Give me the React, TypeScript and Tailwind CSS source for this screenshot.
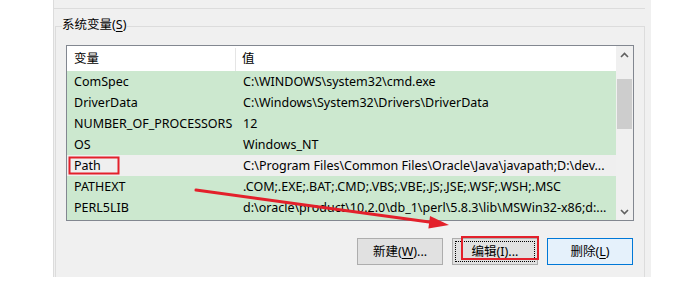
import React from "react";

const rows = [
  { name: "ComSpec", value: "C:\\WINDOWS\\system32\\cmd.exe" },
  { name: "DriverData", value: "C:\\Windows\\System32\\Drivers\\DriverData" },
  { name: "NUMBER_OF_PROCESSORS", value: "12" },
  { name: "OS", value: "Windows_NT" },
  { name: "Path", value: "C:\\Program Files\\Common Files\\Oracle\\Java\\javapath;D:\\dev...", hover: true },
  { name: "PATHEXT", value: ".COM;.EXE;.BAT;.CMD;.VBS;.VBE;.JS;.JSE;.WSF;.WSH;.MSC" },
  { name: "PERL5LIB", value: "d:\\oracle\\product\\10.2.0\\db_1\\perl\\5.8.3\\lib\\MSWin32-x86;d:..." },
];

function Chevron({ up }: { up?: boolean }) {
  return (
    <svg width="9" height="6" viewBox="0 0 9 6">
      <path
        d={up ? "M1 5 L4.5 1.5 L8 5" : "M1 1 L4.5 4.5 L8 1"}
        fill="none"
        stroke="#606060"
        strokeWidth="1.6"
      />
    </svg>
  );
}

function Scrollbar() {
  return (
    <div className="flex w-[17px] flex-col bg-[#f0f0f0]">
      <div className="flex h-[17px] items-center justify-center">
        <Chevron up />
      </div>
      <div className="h-[16px]" />
      <div className="mx-px h-[50px] bg-[#cdcdcd]" />
      <div className="flex-1" />
      <div className="flex h-[17px] items-center justify-center">
        <Chevron />
      </div>
    </div>
  );
}

function Btn({
  label,
  hot,
  tail,
  focus,
  active,
}: {
  label: string;
  hot: string;
  tail: string;
  focus?: boolean;
  active?: boolean;
}) {
  return (
    <div
      className={
        active
          ? "flex h-[27px] w-[86px] items-center justify-center border border-[#0078d7] bg-[#e5f1fb]"
          : "flex h-[27px] w-[86px] items-center justify-center border border-[#adadad] bg-[#e1e1e1]"
      }
    >
      <div
        className={
          focus
            ? "flex h-[21px] w-[80px] items-center justify-center border border-dotted border-black pt-px"
            : "flex h-[21px] w-[80px] items-center justify-center pt-px"
        }
      >
        <span>
          {label}(<span className="underline underline-offset-2">{hot}</span>){tail}
        </span>
      </div>
    </div>
  );
}

export default function App() {
  return (
    <div
      className="relative flex h-[287px] w-[684px] overflow-hidden bg-white text-[12.5px] leading-none text-black"
      style={{ fontFamily: '"Noto Sans", "Noto Sans CJK SC", sans-serif' }}
    >
      <div className="ml-[53px] flex h-[277px] w-[598px] flex-col border-l border-[#dcdcdc] bg-[#f0f0f0]">
        <div className="h-[8px]" />
        <div className="h-px w-[591px] bg-[#dcdcdc]" />
        <div className="h-[17px]" />

        {/* group box */}
        <div className="relative ml-px flex h-[251px] w-[590px] flex-col border-l border-r border-t border-[#dcdcdc]">
          <span className="absolute left-[6px] top-[-8px] bg-[#f0f0f0] pr-px">
            系统变量(<span className="underline underline-offset-2">S</span>)
          </span>

          {/* list view */}
          <div className="ml-[10px] mt-[18px] flex h-[176px] w-[568px] border border-[#828790]">
            <div className="flex flex-1 flex-col bg-[#cce8cf]">
              <div className="flex h-[25px] bg-white pt-[2px]">
                <div className="flex w-[169px] items-center border-r border-[#e5e5e5] pl-[7px]">变量</div>
                <div className="flex items-center pl-[6px]">值</div>
              </div>
              {rows.map((r) => (
                <div
                  key={r.name}
                  className={
                    r.hover ? "flex h-[21px] items-center bg-[#efefef] pt-[2px]" : "flex h-[21px] items-center pt-[2px]"
                  }
                >
                  <div className="w-[169px] shrink-0 pl-[7px]">{r.name}</div>
                  <div className="whitespace-nowrap pl-[7px]">{r.value}</div>
                </div>
              ))}
            </div>
            <Scrollbar />
          </div>

          {/* buttons */}
          <div className="ml-[301px] mt-[17px] flex gap-[9px]">
            <Btn label="新建" hot="W" tail="..." />
            <Btn label="编辑" hot="I" tail="..." focus />
            <Btn label="删除" hot="L" tail="" active />
          </div>
        </div>
      </div>

      {/* red annotations */}
      <svg className="pointer-events-none absolute inset-0" width="684" height="287" viewBox="0 0 684 287">
        <rect x="69.5" y="157.5" width="49" height="16" fill="none" stroke="#e3202b" strokeWidth="2" />
        <rect x="462" y="237" width="76" height="22" fill="none" stroke="#e3202b" strokeWidth="2" />
        <line x1="196" y1="190" x2="431" y2="222.3" stroke="#e3202b" strokeWidth="3" strokeLinecap="round" />
        <polygon points="449,225 430,216 428.4,228.4" fill="#e3202b" />
      </svg>
    </div>
  );
}
